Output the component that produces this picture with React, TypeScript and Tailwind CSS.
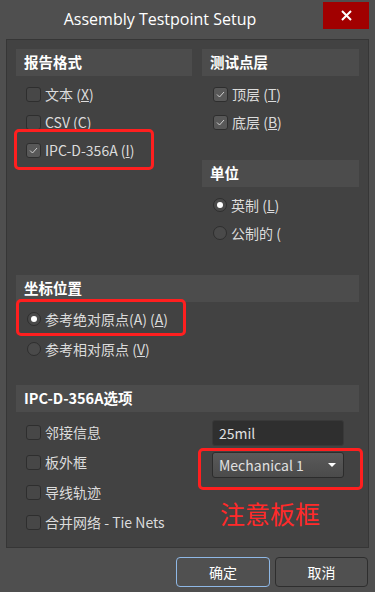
import React from "react";

const font = { fontFamily: '"Noto Sans CJK SC", "Noto Sans", sans-serif' };

function Check({ checked }: { checked?: boolean }) {
  return (
    <div
      className={`w-[15px] h-[15px] rounded-[3px] border border-[#2e2e2e] flex items-center justify-center shrink-0 ${
        checked ? "bg-[#585858]" : "bg-[#474747]"
      }`}
    >
      {checked && (
        <svg width="9" height="7" viewBox="0 0 9 7">
          <path d="M1 3.5 L3.5 6 L8 1" fill="none" stroke="#d0d0d0" strokeWidth="1" />
        </svg>
      )}
    </div>
  );
}

function Radio({ checked }: { checked?: boolean }) {
  return (
    <div className="w-[14px] h-[14px] rounded-full border border-[#2e2e2e] bg-[#4a4a4a] flex items-center justify-center shrink-0">
      {checked && <div className="w-[6px] h-[6px] rounded-full bg-white" />}
    </div>
  );
}

function Header({ children }: { children: React.ReactNode }) {
  return (
    <div className="h-[27px] bg-[#4c4c4c] flex items-center pl-[8px] text-[14.5px] font-bold text-white leading-none">
      {children}
    </div>
  );
}

function Row({
  children,
  h = "h-[28px]",
  pl = "pl-[10px]",
}: {
  children: React.ReactNode;
  h?: string;
  pl?: string;
}) {
  return (
    <div className={`${h} ${pl} flex items-center gap-[4px] text-[14px] text-[#dcdcdc] leading-none`}>
      {children}
    </div>
  );
}

export default function App() {
  return (
    <div className="w-[375px] h-[592px] bg-[#4f4f4f] relative overflow-hidden" style={font}>
      {/* title bar */}
      <div className="h-[39px] relative flex items-start">
        <div
          className="absolute left-0 right-[55px] top-[11px] text-center text-[16px] text-white leading-none"
          style={{ fontFamily: '"Open Sans", "Noto Sans", sans-serif' }}
        >
          Assembly Testpoint Setup
        </div>
        <div className="absolute right-[6px] top-[2px] w-[46px] h-[27px] bg-[#a10000] flex items-center justify-center">
          <svg width="11" height="11" viewBox="0 0 11 11">
            <path d="M1 1 L10 10 M10 1 L1 10" stroke="white" strokeWidth="2" />
          </svg>
        </div>
      </div>

      {/* panel */}
      <div className="ml-[6px] w-[363px] h-[509px] bg-[#424242] border border-[#363636] pt-[9px] px-[9px] flex flex-col">
        <div className="flex gap-[10px]">
          {/* left column */}
          <div className="w-[176px] flex flex-col">
            <Header>报告格式</Header>
            <div className="h-[4px]" />
            <Row>
              <Check />
              <span>
                文本 (<u>X</u>)
              </span>
            </Row>
            <Row>
              <Check />
              <span>CSV (C)</span>
            </Row>
            <Row>
              <Check checked />
              <span>
                IPC-D-356A (<u>I</u>)
              </span>
            </Row>
          </div>
          {/* right column */}
          <div className="w-[157px] flex flex-col">
            <Header>测试点层</Header>
            <div className="h-[4px]" />
            <Row pl="pl-[11px]">
              <Check checked />
              <span>
                顶层 (<u>T</u>)
              </span>
            </Row>
            <Row pl="pl-[11px]">
              <Check checked />
              <span>
                底层 (<u>B</u>)
              </span>
            </Row>
            <div className="h-[24px]" />
            <Header>单位</Header>
            <div className="h-[4px]" />
            <Row pl="pl-[11px]">
              <Radio checked />
              <span>
                英制 (<u>L</u>)
              </span>
            </Row>
            <Row pl="pl-[11px]">
              <Radio />
              <span>公制的 (</span>
            </Row>
          </div>
        </div>

        <div className="h-[28px]" />
        <Header>坐标位置</Header>
        <div className="h-[2px]" />
        <Row h="h-[30px]" pl="pl-[11px]">
          <Radio checked />
          <span>
            参考绝对原点(A) (<u>A</u>)
          </span>
        </Row>
        <Row h="h-[30px]" pl="pl-[11px]">
          <Radio />
          <span>
            参考相对原点 (<u>V</u>)
          </span>
        </Row>

        <div className="h-[21px]" />
        <Header>IPC-D-356A选项</Header>
        <div className="flex">
          <div className="w-[186px] flex flex-col pt-[5px]">
            <Row h="h-[30px]">
              <Check />
              <span>邻接信息</span>
            </Row>
            <Row h="h-[30px]">
              <Check />
              <span>板外框</span>
            </Row>
            <Row h="h-[30px]">
              <Check />
              <span>导线轨迹</span>
            </Row>
            <Row h="h-[30px]">
              <Check />
              <span>合并网络 - Tie Nets</span>
            </Row>
          </div>
          <div className="flex flex-col pt-[8px] pl-[10px]">
            <div className="w-[132px] h-[26px] bg-[#2f2f2f] border border-[#393939] rounded-[3px] flex items-center pl-[6px] text-[14px] text-[#e0e0e0] leading-none">
              25mil
            </div>
            <div className="h-[6px]" />
            <div className="w-[132px] h-[26px] bg-gradient-to-b from-[#5a5a5a] to-[#4b4b4b] border border-[#2c2c2c] rounded-[3px] flex items-center justify-between pl-[6px] pr-[7px] text-[14px] text-[#e0e0e0] leading-none">
              <span>Mechanical 1</span>
              <svg width="8" height="4" viewBox="0 0 8 4">
                <path d="M0 0 L8 0 L4 4 Z" fill="white" />
              </svg>
            </div>
            <div className="pl-[8px] pt-[23px] text-[25px] text-[#ff2a2a] leading-none">
              注意板框
            </div>
          </div>
        </div>
      </div>

      {/* buttons */}
      <div className="flex justify-end gap-[5px] pr-[7px] pt-[9px]">
        <div className="w-[94px] h-[30px] border border-[#8fb8e6] rounded-[4px] bg-[#505050] flex items-center justify-center text-[14px] text-white">
          确定
        </div>
        <div className="w-[93px] h-[30px] border border-[#2e2e2e] rounded-[4px] bg-[#505050] flex items-center justify-center text-[14px] text-white">
          取消
        </div>
      </div>

      {/* red annotation boxes */}
      <div className="absolute left-[14px] top-[129px] w-[140px] h-[41px] border-[3px] border-[#ff1f1f] rounded-[5px] pointer-events-none" />
      <div className="absolute left-[16px] top-[299px] w-[170px] h-[37px] border-[3px] border-[#ff1f1f] rounded-[5px] pointer-events-none" />
      <div className="absolute left-[198px] top-[448px] w-[165px] h-[42px] border-[3px] border-[#ff1f1f] rounded-[5px] pointer-events-none" />
    </div>
  );
}
